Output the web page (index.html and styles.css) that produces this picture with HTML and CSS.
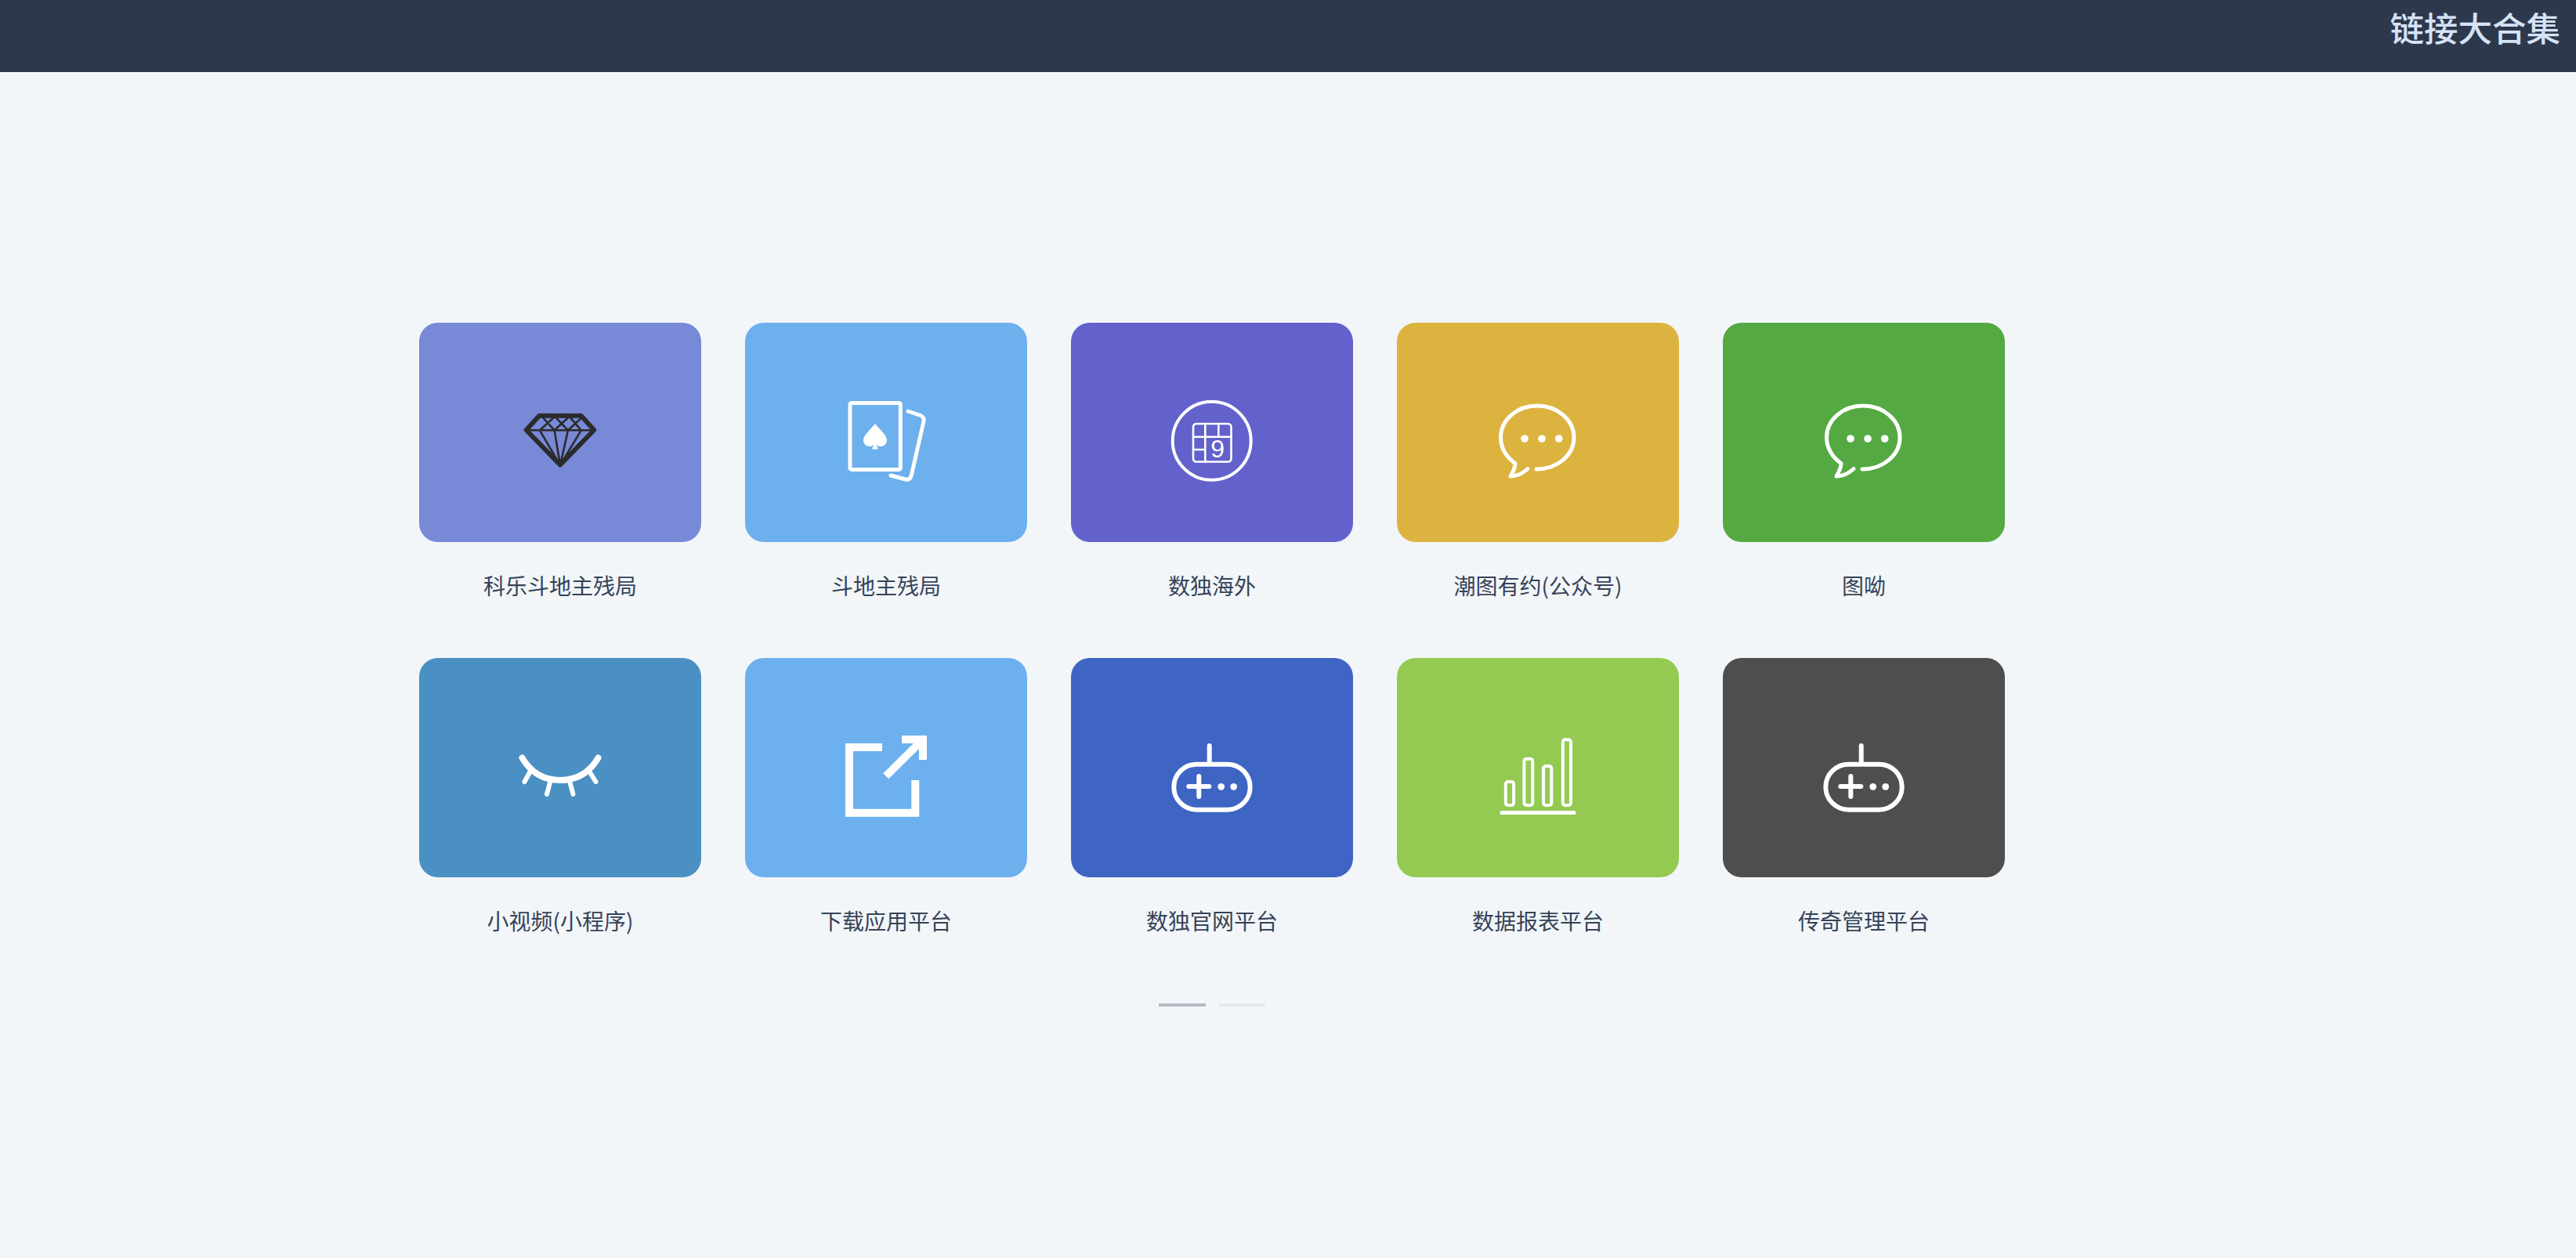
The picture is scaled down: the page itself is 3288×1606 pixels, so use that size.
FILE: index.html
```html
<!DOCTYPE html>
<html lang="zh-CN">
<head>
    <meta charset="UTF-8">
    <title>链接大合集</title>
    <link rel="stylesheet" href="styles.css">
</head>
<body>

    <!-- 顶栏 -->
    <header class="topbar">
        <span class="topbar-title">链接大合集</span>
    </header>

    <main class="content">
        <div class="grid">

            <a class="item" href="#">
                <div class="card card-indigo">
                    <svg class="icon" viewBox="0 0 360 280">
                        <g class="dark">
                            <path class="w6" d="M153.3 118.7H206.7L223.3 137L180 181.5L136.7 137Z"/>
                            <path class="w3" d="M137 137.3H223M154 137.3L173.3 119.7M156.7 119.7L172.7 137.3M172.7 137.3L191.7 119.7M173.3 119.7L190 137.3M190 137.3L209 119.7M191.7 119.7L206.7 137.3"/>
                            <path class="w3" d="M154 137.3L180 182M172.7 137.3L180 182M190 137.3L180 182M206.7 137.3L180 182"/>
                        </g>
                    </svg>
                </div>
                <p class="label">科乐斗地主残局</p>
            </a>

            <a class="item" href="#">
                <div class="card card-sky">
                    <svg class="icon" viewBox="0 0 360 280">
                        <g class="line">
                            <rect class="w5" x="134" y="102.4" width="64.4" height="85" rx="2"/>
                            <path class="w5" d="M208 113L223 118Q229 120 228 126L212 196Q210 201 205 200L186 195"/>
                        </g>
                        <path class="solid" d="M166 128.7C160 137 151 143 151 150C151 155 155 158 159 158C161 158 163.5 157 164.5 155L162 161.5H170L167.5 155C168.5 157 171 158 173 158C177 158 181 155 181 150C181 143 172 137 166 128.7Z"/>
                    </svg>
                </div>
                <p class="label">斗地主残局</p>
            </a>

            <a class="item" href="#">
                <div class="card card-violet">
                    <svg class="icon" viewBox="0 0 360 280">
                        <g class="line">
                            <circle class="w4" cx="179.7" cy="150.7" r="50"/>
                            <rect class="w3" x="156" y="129" width="48.5" height="48.5" rx="4"/>
                            <path class="w3" d="M171.3 129V177.5M188.3 129V145.7M156 145.7H204.5M156 162H171.3"/>
                        </g>
                        <text class="digit" x="187.2" y="172">9</text>
                    </svg>
                </div>
                <p class="label">数独海外</p>
            </a>

            <a class="item" href="#">
                <div class="card card-gold">
                    <svg class="icon" viewBox="0 0 360 280">
                        <path class="line w5" d="M178 187C205 187 226 169 226 146.5C226 124 205 106 179 106C153 106 132.5 124 132.5 146.5C132.5 160 140 172 151 179.5C151 185 148 191 145 196C153 196 161 192 167 186.5"/>
                        <circle class="solid" cx="163" cy="148" r="4.8"/>
                        <circle class="solid" cx="185" cy="148" r="4.8"/>
                        <circle class="solid" cx="206.7" cy="148" r="4.8"/>
                    </svg>
                </div>
                <p class="label">潮图有约(公众号)</p>
            </a>

            <a class="item" href="#">
                <div class="card card-green">
                    <svg class="icon" viewBox="0 0 360 280">
                        <path class="line w5" d="M178 187C205 187 226 169 226 146.5C226 124 205 106 179 106C153 106 132.5 124 132.5 146.5C132.5 160 140 172 151 179.5C151 185 148 191 145 196C153 196 161 192 167 186.5"/>
                        <circle class="solid" cx="163" cy="148" r="4.8"/>
                        <circle class="solid" cx="185" cy="148" r="4.8"/>
                        <circle class="solid" cx="206.7" cy="148" r="4.8"/>
                    </svg>
                </div>
                <p class="label">图呦</p>
            </a>

            <a class="item" href="#">
                <div class="card card-ocean">
                    <svg class="icon" viewBox="0 0 360 280">
                        <path class="line w8" d="M131.5 127.5C143 147 160 156 180 156C200 156 217 147 228.5 127.5"/>
                        <path class="line w6" d="M141.6 145L134.5 158M166.9 159.3L163 174M192.6 159.3L196.5 174M217.3 145L225.5 158"/>
                    </svg>
                </div>
                <p class="label">小视频(小程序)</p>
            </a>

            <a class="item" href="#">
                <div class="card card-sky">
                    <svg class="icon" viewBox="0 0 360 280">
                        <path class="square w10" d="M175 114H133V197.7H217.3V156"/>
                        <path class="square w10" d="M200 104H227V130M179.8 150.7L227 104"/>
                    </svg>
                </div>
                <p class="label">下载应用平台</p>
            </a>

            <a class="item" href="#">
                <div class="card card-blue">
                    <svg class="icon" viewBox="0 0 360 280">
                        <g class="line w6">
                            <rect x="131.3" y="135.7" width="97.4" height="58" rx="29"/>
                            <path d="M176.7 112V135M150.3 164H176.3M163.3 151V177"/>
                        </g>
                        <circle class="solid" cx="191.7" cy="164.3" r="4.4"/>
                        <circle class="solid" cx="207.7" cy="164.3" r="4.4"/>
                    </svg>
                </div>
                <p class="label">数独官网平台</p>
            </a>

            <a class="item" href="#">
                <div class="card card-lime">
                    <svg class="icon" viewBox="0 0 360 280">
                        <g class="line w4">
                            <rect x="138.8" y="158" width="10.3" height="30" rx="3"/>
                            <rect x="162.4" y="128.7" width="10.8" height="59.3" rx="3"/>
                            <rect x="187" y="138" width="10.3" height="50" rx="3"/>
                            <rect x="211.8" y="104.3" width="10.2" height="83.7" rx="3"/>
                        </g>
                        <path class="line w5" d="M134 197.5H226"/>
                    </svg>
                </div>
                <p class="label">数据报表平台</p>
            </a>

            <a class="item" href="#">
                <div class="card card-gray">
                    <svg class="icon" viewBox="0 0 360 280">
                        <g class="line w6">
                            <rect x="131.3" y="135.7" width="97.4" height="58" rx="29"/>
                            <path d="M176.7 112V135M150.3 164H176.3M163.3 151V177"/>
                        </g>
                        <circle class="solid" cx="191.7" cy="164.3" r="4.4"/>
                        <circle class="solid" cx="207.7" cy="164.3" r="4.4"/>
                    </svg>
                </div>
                <p class="label">传奇管理平台</p>
            </a>

        </div>

        <div class="dots">
            <span class="dot dot-on"></span>
            <span class="dot"></span>
        </div>
    </main>

</body>
</html>
```

FILE: styles.css
```css
* {
    box-sizing: border-box;
}

body {
    margin: 0;
    min-height: 100vh;
    background-color: #f2f6f9;
    font-family: "Noto Sans CJK SC", "Noto Sans", sans-serif;
}

.topbar {
    display: flex;
    justify-content: flex-end;
    height: 92px;
    padding-right: 20px;
    background-color: #2d384c;
}

.topbar-title {
    font-size: 43.5px;
    font-weight: 500;
    line-height: 70px;
    color: #d6e2f5;
}

.content {
    width: 2024px;
    margin-left: 535px;
    padding-top: 320px;
}

.grid {
    display: grid;
    grid-template-columns: repeat(5, 360px);
    column-gap: 56px;
    row-gap: 73px;
}

.item {
    display: block;
    text-decoration: none;
}

.card {
    height: 280px;
    border-radius: 24px;
    overflow: hidden;
}

.card-indigo { background-color: #7889d7; }
.card-sky { background-color: #6cb0ee; }
.card-violet { background-color: #6361cb; }
.card-gold { background-color: #dcb33f; }
.card-green { background-color: #55a942; }
.card-ocean { background-color: #4a90c2; }
.card-blue { background-color: #3e64c4; }
.card-lime { background-color: #94ca52; }
.card-gray { background-color: #4e4e4e; }

.icon {
    display: block;
    width: 360px;
    height: 280px;
}

.line,
.dark {
    fill: none;
    stroke-linecap: round;
    stroke-linejoin: round;
}

.line {
    stroke: #fff;
}

.dark {
    stroke: #2b2b2b;
}

.square {
    fill: none;
    stroke: #fff;
}

.solid {
    fill: #fff;
}

.w3 { stroke-width: 2.6px; }
.w4 { stroke-width: 4px; }
.w5 { stroke-width: 5px; }
.w6 { stroke-width: 6px; }
.w8 { stroke-width: 8px; }
.w10 { stroke-width: 10px; }

.digit {
    fill: #fff;
    font-family: "Liberation Sans", sans-serif;
    font-size: 32px;
    text-anchor: middle;
}

.label {
    margin: 35px 0 0;
    font-size: 28px;
    line-height: 40px;
    text-align: center;
    color: #364358;
}

.dots {
    display: flex;
    justify-content: center;
    gap: 16px;
    margin-top: 86px;
}

.dot {
    width: 60px;
    height: 4px;
    background-color: #e6e9ed;
}

.dot-on {
    background-color: #b5b9c5;
}
```
